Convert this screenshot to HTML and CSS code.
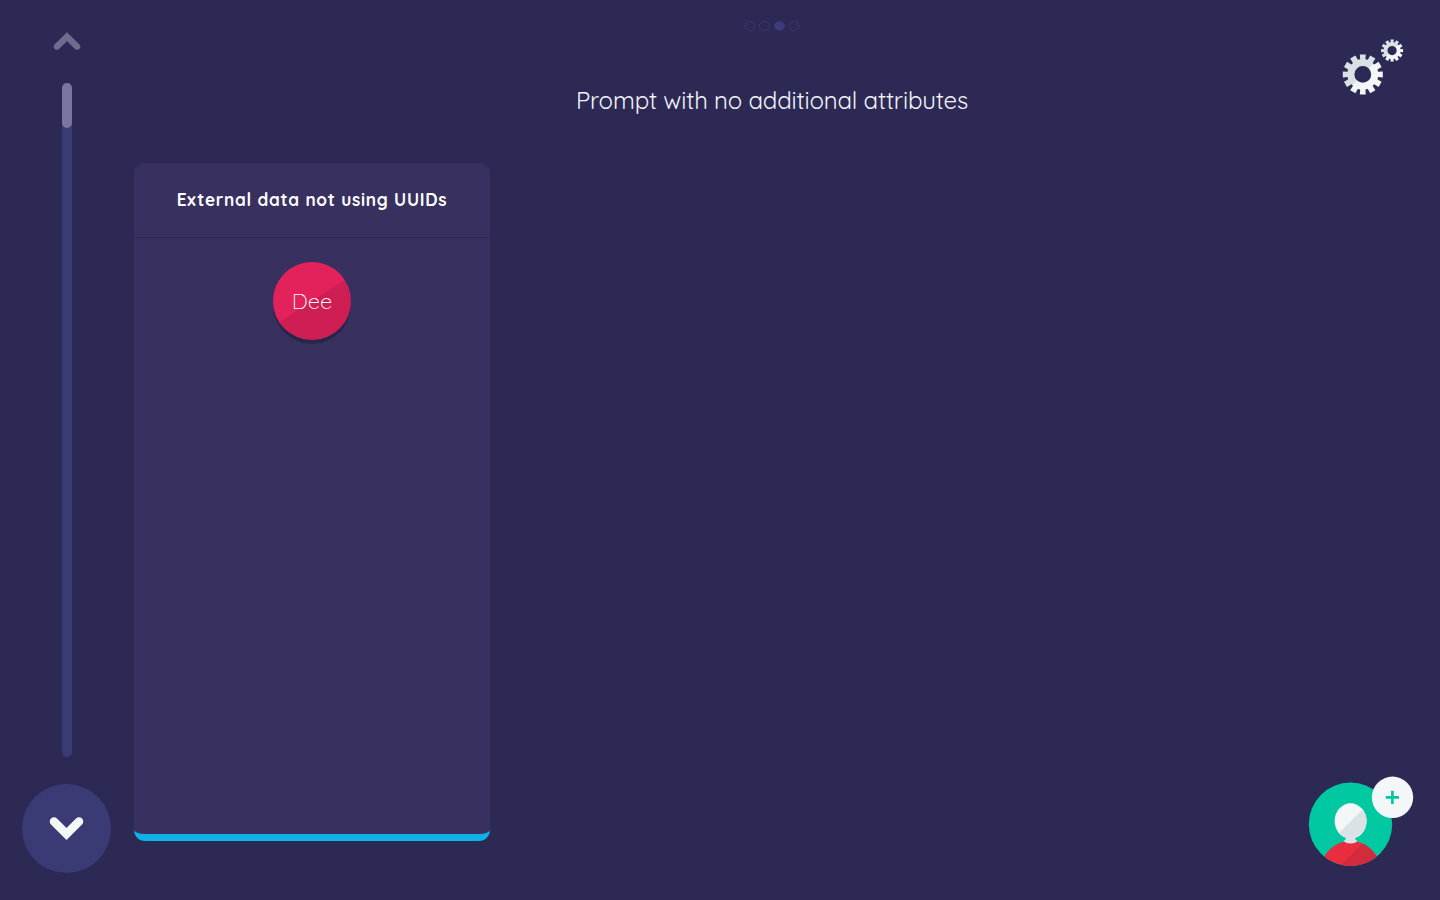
FILE: index.html
```html
<!DOCTYPE html>
<html lang="en">
<head>
<meta charset="utf-8">
<title>Interview</title>
<link rel="stylesheet" href="styles.css">
</head>
<body>
<div class="app">
  <nav class="timeline">
    <button class="up" aria-label="Back"><svg width="28" height="20" viewBox="0 0 28 20"><path d="M4 14.5 14 4.7 24 14.5" /></svg></button>
    <div class="track"><div class="thumb"></div></div>
    <button class="down" aria-label="Next"><svg width="37" height="26" viewBox="0 0 37 26"><path d="M6 5.500 18.500 18 31 5.500" /></svg></button>
  </nav>
  <main class="stage">
    <div class="dots"><i></i><i></i><i class="on"></i><i></i></div>
    <h1 class="prompt"><span>Prompt with no additional attributes</span></h1>
    <section class="panel">
      <header class="panel-title"><span>External data not using UUIDs</span></header>
      <div class="node"><span>Dee</span></div>
    </section>
  </main>
  <svg class="settings" width="64" height="60" viewBox="1341 37 64 60">
    <defs>
      <linearGradient id="shade" x1="0" y1="0" x2="1" y2="1">
        <stop offset=".5" stop-color="#d9e1e4"/><stop offset=".5" stop-color="#f3f7f8"/>
      </linearGradient>
      <g id="gear">
        <path fill="url(#shade)" fill-rule="evenodd" d="M-3-20H3L2.6-15.2 5-14.7 7.4-18.8 12.6-15.8 9.8-11.4 11.4-9.8 15.8-12.6 18.8-7.4 14.7-5 15.2-2.6 20-3V3L15.2 2.6 14.7 5 18.8 7.4 15.8 12.6 11.4 9.8 9.8 11.4 12.6 15.8 7.4 18.8 5 14.7 2.6 15.2 3 20H-3L-2.6 15.2-5 14.7-7.4 18.8-12.6 15.8-9.8 11.4-11.4 9.8-15.8 12.6-18.8 7.4-14.7 5-15.2 2.6-20 3V-3L-15.2-2.6-14.7-5-18.8-7.4-15.8-12.6-11.4-9.8-9.8-11.4-12.6-15.8-7.4-18.8-5-14.7-2.6-15.2ZM8.4 0A8.4 8.4 0 1 0-8.4 0 8.4 8.4 0 1 0 8.4 0Z"/>
      </g>
    </defs>
    <use href="#gear" transform="translate(1362.8 74.4)"/>
    <use href="#gear" transform="translate(1392.1 50.6) scale(.55)"/>
  </svg>
  <svg class="add-person" width="108" height="94" viewBox="1307 774 108 94">
    <defs>
      <clipPath id="disc"><circle cx="1350.5" cy="824.2" r="41.7"/></clipPath>
      <clipPath id="lower"><path d="M1326 846 1380 792V868H1326Z"/></clipPath>
      <clipPath id="body-shade"><path d="M1340 866 1364 842H1392V868H1340Z"/></clipPath>
    </defs>
    <circle cx="1350.5" cy="824.2" r="41.7" fill="#00c9a2"/>
    <g clip-path="url(#disc)">
      <path d="M1320 868C1324 850 1337 841 1350.5 841S1377 850 1381 868Z" fill="#e82d3f"/>
      <path d="M1320 868C1324 850 1337 841 1350.5 841S1377 850 1381 868Z" fill="#d22b3b" clip-path="url(#body-shade)"/>
    </g>
    <path d="M1346 835H1355V838Q1355 840 1357.500 841Q1355 843.500 1350.500 843.500T1343.500 841Q1346 840 1346 838Z" fill="#dae2e5"/>
    <ellipse cx="1350.600" cy="821" rx="16" ry="17.700" fill="#f3f7f8"/>
    <ellipse cx="1350.600" cy="821" rx="16" ry="17.700" fill="#dae2e5" clip-path="url(#lower)"/>
    <circle cx="1392.500" cy="797.300" r="20.700" fill="#f3f7f8"/>
    <path d="M1392.400 790.800V804M1385.800 797.400H1399" stroke="#00c9a2" stroke-width="2.700"/>
  </svg>
</div>
</body>
</html>
```
FILE: styles.css
```css
* { box-sizing: border-box; }
body { margin: 0; background: #2d2955; color: #fff; font-family: Quicksand, Lato, sans-serif; }
.app { position: relative; display: flex; width: 100%; height: 900px; overflow: hidden; }
button { border: 0; padding: 0; background: none; display: flex; align-items: center; justify-content: center; }
svg { display: block; }
.timeline { width: 134px; padding: 32px 1px 27px 0; display: flex; flex-direction: column; align-items: center; }
.up { height: 20px; margin: 0 0 31px 1px; }
.up path, .down path { fill: none; stroke: #f3f7f8; stroke-width: 6.500; stroke-linecap: round; stroke-linejoin: miter; }
.up path { stroke: #706b8e; }
.track { flex: 1; width: 10px; margin-left: 1px; border-radius: 5px; background: #3a3a75; }
.thumb { height: 45px; border-radius: 5px; background: #7a769f; }
.down { width: 89px; height: 89px; margin-top: 27px; border-radius: 50%; background: #3a3a75; }
.down path { stroke-width: 8.500; }
.stage { flex: 1; margin-right: 30px; display: flex; flex-direction: column; align-items: center; padding-top: 21px; }
.dots { display: flex; gap: 4px; height: 10px; }
.dots i { width: 10.700px; height: 10px; border: 1px solid #37366f; border-radius: 50%; }
.dots .on { background: #3d3d7b; }
.prompt { margin: 51px 0 0; height: 36px; line-height: 36px; font-size: 24px; font-weight: 400; letter-spacing: -.17px; color: #f3f3f8; white-space: nowrap; }
.panel { align-self: flex-start; width: 356px; height: 678px; margin-top: 45px; border-radius: 11px; border-bottom: 7px solid #10b1e6; background: #38315f; display: flex; flex-direction: column; align-items: center; }
.panel-title { width: 100%; height: 75px; padding-top: 2px; display: flex; justify-content: center; border-bottom: 1px solid #2e2955; line-height: 70px; font-size: 17.200px; font-weight: 700; letter-spacing: .74px; white-space: nowrap; }
.node { width: 78px; height: 78px; margin-top: 24px; border-radius: 50%; background: linear-gradient(147deg, #e3225b 50%, #cf1e53 50%); box-shadow: 0 4px 0 #2a264b; text-align: center; line-height: 78px; font-size: 22px; font-weight: 300; }
.settings { position: absolute; left: 1341px; top: 37px; }
.add-person { position: absolute; left: 1307px; top: 774px; }
```
